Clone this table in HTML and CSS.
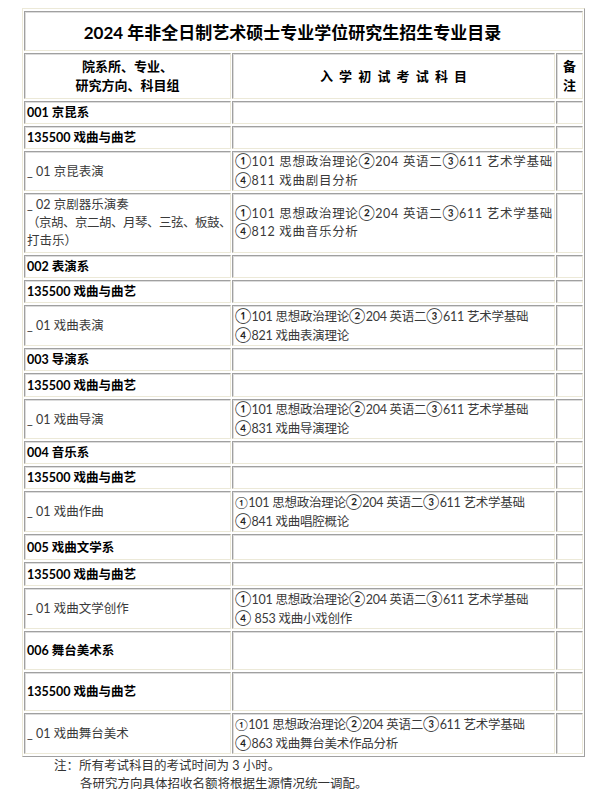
FILE: index.html
```html
<!DOCTYPE html>
<html lang="zh-CN">
<head>
<meta charset="utf-8">
<title>2024 年非全日制艺术硕士专业学位研究生招生专业目录</title>
<link rel="stylesheet" href="styles.css">
</head>
<body>
<table class="catalog">
  <colgroup><col class="c1"><col class="c2"><col class="c3"></colgroup>
  <tr class="h40"><td colspan="3" class="title">2024 年非全日制艺术硕士专业学位研究生招生专业目录</td></tr>
  <tr class="h46"><td class="head">院系所、专业、<br>研究方向、科目组</td><td class="head spaced">入 学 初 试 考 试 科 目</td><td class="head">备<br>注</td></tr>

  <tr class="h23"><td class="strong">001 京昆系</td><td></td><td></td></tr>
  <tr class="h23"><td class="strong">135500 戏曲与曲艺</td><td></td><td></td></tr>
  <tr class="h40"><td>_ 01 京昆表演</td><td class="exam wide"><span class="n">①</span>101 思想政治理论<span class="n">②</span>204 英语二<span class="n">③</span>611 艺术学基础<br><span class="n">④</span>811 戏曲剧目分析</td><td></td></tr>
  <tr class="h60"><td class="l18">_ 02 京剧器乐演奏<br><span class="tight">（京胡、京二胡、月琴、三弦、板鼓、</span><br>打击乐）</td><td class="exam wide l18"><span class="n">①</span>101 思想政治理论<span class="n">②</span>204 英语二<span class="n">③</span>611 艺术学基础<br><span class="n">④</span>812 戏曲音乐分析</td><td></td></tr>

  <tr class="h23"><td class="strong">002 表演系</td><td></td><td></td></tr>
  <tr class="h23"><td class="strong">135500 戏曲与曲艺</td><td></td><td></td></tr>
  <tr class="h41"><td>_ 01 戏曲表演</td><td class="exam"><span class="n">①</span>101 思想政治理论<span class="n">②</span>204 英语二<span class="n">③</span>611 艺术学基础<br><span class="n">④</span>821 戏曲表演理论</td><td></td></tr>

  <tr class="h23"><td class="strong">003 导演系</td><td></td><td></td></tr>
  <tr class="h24"><td class="strong">135500 戏曲与曲艺</td><td></td><td></td></tr>
  <tr class="h40"><td>_ 01 戏曲导演</td><td class="exam"><span class="n">①</span>101 思想政治理论<span class="n">②</span>204 英语二<span class="n">③</span>611 艺术学基础<br><span class="n">④</span>831 戏曲导演理论</td><td></td></tr>

  <tr class="h23"><td class="strong">004 音乐系</td><td></td><td></td></tr>
  <tr class="h23"><td class="strong">135500 戏曲与曲艺</td><td></td><td></td></tr>
  <tr class="h41"><td>_ 01 戏曲作曲</td><td class="exam"><span class="n sm">①</span>101 思想政治理论<span class="n">②</span>204 英语二<span class="n">③</span>611 艺术学基础<br><span class="n">④</span>841 戏曲唱腔概论</td><td></td></tr>

  <tr class="h26"><td class="strong">005 戏曲文学系</td><td></td><td></td></tr>
  <tr class="h24"><td class="strong">135500 戏曲与曲艺</td><td></td><td></td></tr>
  <tr class="h41"><td>_ 01 戏曲文学创作</td><td class="exam"><span class="n">①</span>101 思想政治理论<span class="n">②</span>204 英语二<span class="n">③</span>611 艺术学基础<br><span class="n">④</span> 853 戏曲小戏创作</td><td></td></tr>

  <tr class="h39"><td class="strong">006 舞台美术系</td><td></td><td></td></tr>
  <tr class="h39"><td class="strong">135500 戏曲与曲艺</td><td></td><td></td></tr>
  <tr class="h41"><td>_ 01 戏曲舞台美术</td><td class="exam"><span class="n sm">①</span>101 思想政治理论<span class="n">②</span>204 英语二<span class="n">③</span>611 艺术学基础<br><span class="n">④</span>863 戏曲舞台美术作品分析</td><td></td></tr>
</table>
<div class="notes">
  <p class="note-first">注：所有考试科目的考试时间为 3 小时。</p>
  <p class="note-next">各研究方向具体招收名额将根据生源情况统一调配。</p>
</div>
</body>
</html>
```

FILE: styles.css
```css
html, body {
  margin: 0;
  padding: 0;
  background: #ffffff;
}

body {
  margin: 8px;
  font-family: Lato, "Noto Sans CJK SC", sans-serif;
  font-size: 12.5px;
  color: #3a3a3a;
}

.catalog {
  width: 563px;
  margin-left: 14px;
  border-collapse: separate;
  border-spacing: 1px 2px;
  table-layout: fixed;
  border: 1px solid;
  border-color: #ece9d8 #a0a0a0 #a0a0a0 #ece9d8;
}

.c1 { width: 207px; }
.c2 { width: 323px; }
.c3 { width: 27px; }

.catalog td {
  padding: 0 2px;
  border: 1px solid;
  border-color: #a0a0a0 #ece9d8 #ece9d8 #a0a0a0;
  box-shadow: inset 1px 1px 0 #dcdcdc;
  vertical-align: middle;
  line-height: 19px;
  white-space: nowrap;
  overflow: hidden;
  text-align: left;
}

.h23 { height: 23px; }
.h24 { height: 24px; }
.h26 { height: 26px; }
.h39 { height: 39px; }
.h40 { height: 40px; }
.h41 { height: 41px; }
.h46 { height: 46px; }
.h60 { height: 60px; }

.catalog td.title {
  font-size: 17px;
  font-weight: 700;
  color: #000;
  text-align: center;
  padding: 2px 22px 0 0;
}

.catalog td.head {
  font-size: 13px;
  font-weight: 700;
  color: #000;
  text-align: center;
  padding: 0;
}

.spaced {
  word-spacing: 3px;
}

.catalog td.strong {
  font-weight: 700;
  color: #000;
}

.exam {
  letter-spacing: -0.25px;
}

.exam.wide {
  letter-spacing: 0.7px;
}

.catalog td.l18 {
  line-height: 18px;
}

.tight {
  letter-spacing: -0.5px;
}

.n {
  font-size: 15px;
  line-height: 1;
  color: #222;
  letter-spacing: 0;
}

.n.sm {
  font-size: 12px;
}

.notes {
  font-size: 12.5px;
  line-height: 18px;
  color: #333;
}

.notes p {
  margin: 0;
}

.note-first {
  padding-left: 46px;
}

.note-next {
  padding-left: 72px;
}
```
